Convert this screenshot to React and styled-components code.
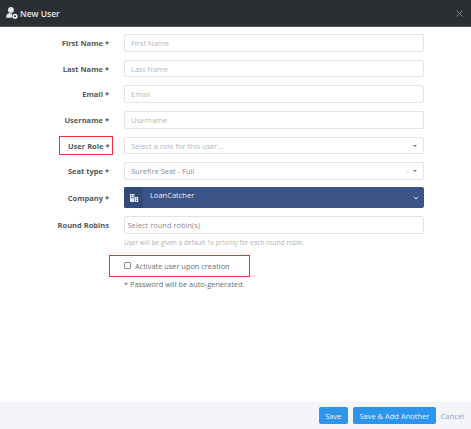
import React from 'react';
import styled, { createGlobalStyle } from 'styled-components';
import { X, ChevronDown } from 'lucide-react';

const GlobalStyle = createGlobalStyle`
  html, body {
    margin: 0;
    padding: 0;
    background: #fff;
    font-family: 'Open Sans', 'Liberation Sans', sans-serif;
  }
`;

const Modal = styled.div`
  width: 471px;
  height: 429px;
  display: flex;
  flex-direction: column;
  overflow: hidden;
`;

const Header = styled.div`
  height: 27px;
  flex: none;
  display: flex;
  align-items: center;
  justify-content: space-between;
  padding: 0 6px 0 5px;
  background: #2b2e33;
  border-bottom: 1px solid #55585c;
  box-sizing: border-box;
`;

const Title = styled.div`
  display: flex;
  align-items: center;
  gap: 1px;
  color: #e6e7e8;
  font-size: 8.5px;
  font-weight: 600;
`;

const CloseButton = styled.span`
  display: flex;
  color: #8d9094;
`;

const Form = styled.div`
  flex: 1;
  display: flex;
  flex-direction: column;
  padding-top: 7px;
`;

const Row = styled.div`
  display: flex;
  align-items: center;
  height: ${props => props.height || 17.7}px;
  margin-bottom: ${props => props.gap ?? 8}px;
`;

const LabelCell = styled.div`
  width: 109px;
  flex: none;
  text-align: right;
  font-size: 7.5px;
  font-weight: 700;
  color: #55585b;
`;

const Highlight = styled.span`
  display: inline-block;
  padding: 3.5px 2px 3.5px 8px;
  margin: -5px -3.5px -5px 0;
  border: 1.5px solid #ee2b38;
`;

const Field = styled.div`
  width: 300px;
  height: 100%;
  margin-left: 15px;
  box-sizing: border-box;
  display: flex;
  align-items: center;
  justify-content: space-between;
  padding: 0 ${props => props.pr ?? 6}px 0 ${props => props.pl ?? 6}px;
  background: #fff;
  border: 1px solid #e2e3e4;
  border-radius: 2px;
  font-size: 7.5px;
  color: ${props => props.color || '#b4b7ba'};
`;

const Caret = styled.span`
  width: 0;
  height: 0;
  margin-left: 2px;
  border-left: 2.5px solid transparent;
  border-right: 2.5px solid transparent;
  border-top: 2.5px solid #777;
`;

const SelectTools = styled.span`
  display: flex;
  align-items: center;
  color: #c3c5c7;
`;

const CompanySelect = styled.div`
  width: 300px;
  height: 21px;
  margin-left: 15px;
  display: flex;
  align-items: center;
  background: #3a5488;
  border-radius: 2px;
  color: #e9edf4;
  font-size: 7.5px;
  overflow: hidden;
`;

const CompanyIcon = styled.span`
  width: 19px;
  height: 100%;
  flex: none;
  display: flex;
  align-items: center;
  justify-content: center;
  background: #324a7a;
`;

const CompanyName = styled.span`
  flex: 1;
  padding: 0 0 5px 7px;
`;

const CompanyChevron = styled.span`
  display: flex;
  padding-right: 4px;
  color: #dfe4ee;
`;

const Hint = styled.div`
  margin: -5px 0 0 124px;
  height: 11px;
  line-height: 11px;
  font-size: 6.5px;
  color: #b0b3b6;
`;

const ActivateBox = styled.label`
  align-self: flex-start;
  margin: 7px 0 0 109px;
  width: 141px;
  height: 22px;
  box-sizing: border-box;
  display: flex;
  align-items: center;
  gap: 4px;
  padding-left: 14px;
  border: 1.5px solid #ee2b38;
  font-size: 7.4px;
  color: #6a6d70;
`;

const Checkbox = styled.span`
  width: 5px;
  height: 5px;
  flex: none;
  background: #fff;
  border: 1px solid #8a8d90;
  border-radius: 1px;
`;

const PasswordNote = styled.div`
  margin: 1px 0 0 124px;
  font-size: 7.4px;
  line-height: 12px;
  color: #6a6d70;
`;

const Footer = styled.div`
  height: 27px;
  flex: none;
  display: flex;
  align-items: center;
  justify-content: flex-end;
  gap: 5px;
  padding: 0 7px 0 0;
  background: #f4f5f8;
`;

const Button = styled.button`
  height: 17px;
  padding: 0 6.5px;
  border: none;
  border-radius: 2px;
  background: #2d95ee;
  color: #e8f3fd;
  font-family: inherit;
  font-size: 7.5px;
  font-weight: 400;
`;

const CancelLink = styled.a`
  font-size: 7.5px;
  color: #7aa6e0;
`;

const UserCogIcon = () => (
  <svg width="14" height="14" viewBox="0 0 13 13" fill="#e6e7e8">
    <circle cx="5.5" cy="3.6" r="2.7" />
    <path d="M1 10.8c0-2.6 1.6-3.9 3-4.2.9.5 1.9.5 2.6.2L6.4 11H1.4z" />
    <circle cx="9.3" cy="9.6" r="2.5" />
    <circle cx="9.3" cy="9.6" r="0.9" fill="#2b2e33" />
  </svg>
);

const BuildingIcon = () => (
  <svg width="10" height="10" viewBox="0 0 10 10" fill="#dfe4ee">
    <path d="M1 1h4.5v8H1z" />
    <path d="M6 4h3.2v5H6z" />
    <path d="M2 2.2h1v1H2zM3.8 2.2h1v1h-1zM2 4.2h1v1H2zM3.8 4.2h1v1h-1zM7 5.2h1v1H7zM7 7h1v1H7z" fill="#324a7a" />
  </svg>
);

const textFields = ['First Name', 'Last Name', 'Email', 'Username'];

const App = () => (
  <>
    <GlobalStyle />
    <Modal>
      <Header>
        <Title>
          <UserCogIcon />
          New User
        </Title>
        <CloseButton>
          <X size={11} strokeWidth={2} />
        </CloseButton>
      </Header>
      <Form>
        {textFields.map(name => (
          <Row key={name}>
            <LabelCell>{name} *</LabelCell>
            <Field>{name}</Field>
          </Row>
        ))}
        <Row>
          <LabelCell>
            <Highlight>User Role *</Highlight>
          </LabelCell>
          <Field>
            Select a role for this user...
            <Caret />
          </Field>
        </Row>
        <Row gap={7}>
          <LabelCell>Seat type *</LabelCell>
          <Field color="#8b8e91">
            Surefire Seat - Full
            <SelectTools>
              <X size={7} strokeWidth={1.5} />
              <Caret />
            </SelectTools>
          </Field>
        </Row>
        <Row height={21}>
          <LabelCell>Company *</LabelCell>
          <CompanySelect>
            <CompanyIcon>
              <BuildingIcon />
            </CompanyIcon>
            <CompanyName>LoanCatcher</CompanyName>
            <CompanyChevron>
              <ChevronDown size={8} strokeWidth={3} />
            </CompanyChevron>
          </CompanySelect>
        </Row>
        <Row>
          <LabelCell>Round Robins</LabelCell>
          <Field pl={2.5} color="#8b8e91">Select round robin(s)</Field>
        </Row>
        <Hint>User will be given a default 1x priority for each round robin.</Hint>
        <ActivateBox>
          <Checkbox />
          Activate user upon creation
        </ActivateBox>
        <PasswordNote>* Password will be auto-generated.</PasswordNote>
      </Form>
      <Footer>
        <Button>Save</Button>
        <Button>Save &amp; Add Another</Button>
        <CancelLink>Cancel</CancelLink>
      </Footer>
    </Modal>
  </>
);

export default App;
